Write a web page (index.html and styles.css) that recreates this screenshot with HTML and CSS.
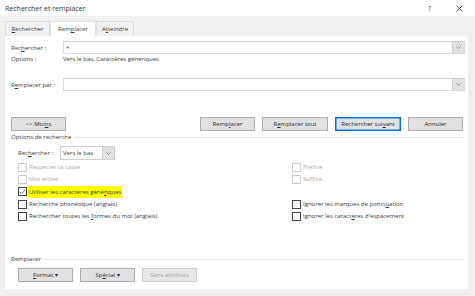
FILE: index.html
```html
<!DOCTYPE html>
<html lang="fr">
<head>
  <meta charset="UTF-8">
  <title>Rechercher et remplacer</title>
  <link rel="stylesheet" href="styles.css">
</head>
<body>
  <div class="titlebar">
    <span class="title">Rechercher et remplacer</span>
    <span class="help">?</span>
    <svg class="close" width="7" height="7" viewBox="0 0 7 7"><path d="M0.5 0.5 L6.5 6.5 M6.5 0.5 L0.5 6.5" stroke="#444" stroke-width="0.9"/></svg>
  </div>

  <div class="tabs">
    <div class="tab"><u>R</u>echercher</div>
    <div class="tab active">Rem<u>p</u>lacer</div>
    <div class="tab">A<u>t</u>teindre</div>
  </div>

  <div class="panel">
    <div class="field-row">
      <span class="label">Rec<u>h</u>ercher :</span>
      <div class="combo">
        <span class="combo-text">*</span>
        <span class="drop"><svg width="5" height="3" viewBox="0 0 5 3"><path d="M0.3 0.3 L2.5 2.5 L4.7 0.3" fill="none" stroke="#777" stroke-width="0.7"/></svg></span>
      </div>
    </div>
    <div class="info-row">
      <span class="label">Options :</span>
      <span>Vers le bas, Caractères génériques</span>
    </div>
    <div class="field-row replace">
      <span class="label">R<u>e</u>mplacer par :</span>
      <div class="combo">
        <span class="combo-text"></span>
        <span class="drop"><svg width="5" height="3" viewBox="0 0 5 3"><path d="M0.3 0.3 L2.5 2.5 L4.7 0.3" fill="none" stroke="#777" stroke-width="0.7"/></svg></span>
      </div>
    </div>

    <div class="actions">
      <button class="btn">&lt;&lt; Moi<u>n</u>s</button>
      <div class="spacer"></div>
      <button class="btn">Remp<u>l</u>acer</button>
      <button class="btn wide">R<u>e</u>mplacer tout</button>
      <button class="btn wide default">Rechercher sui<u>v</u>ant</button>
      <button class="btn">Annuler</button>
    </div>

    <div class="group-title"><span>Options de recherche</span></div>

    <div class="direction">
      <span class="label">Rec<u>h</u>ercher :</span>
      <div class="select">
        <span class="combo-text">Vers le bas</span>
        <span class="drop"><svg width="5" height="3" viewBox="0 0 5 3"><path d="M0.3 0.3 L2.5 2.5 L4.7 0.3" fill="none" stroke="#777" stroke-width="0.7"/></svg></span>
      </div>
    </div>

    <div class="checks">
      <div class="check disabled"><span class="box"></span><span>Respecter la casse</span></div>
      <div class="check disabled"><span class="box"></span><span>Préfixe</span></div>
      <div class="check disabled"><span class="box"></span><span>Mot entier</span></div>
      <div class="check disabled"><span class="box"></span><span>Suffixe</span></div>
      <div class="check"><span class="box"><svg width="7" height="6" viewBox="0 0 7 6"><path d="M0.8 3 L2.6 4.8 L6.2 0.8" fill="none" stroke="#444" stroke-width="0.8"/></svg></span><span class="mark">Utiliser les caractères géné<u>r</u>iques</span></div>
      <div class="check"></div>
      <div class="check"><span class="box"></span><span>Recherche phonétique (anglais)</span></div>
      <div class="check"><span class="box"></span><span>Ignorer les marques de ponct<u>u</u>ation</span></div>
      <div class="check"><span class="box"></span><span>Rechercher toutes les <u>f</u>ormes du mot (anglais)</span></div>
      <div class="check"><span class="box"></span><span>Ignorer les caract<u>è</u>res d'espacement</span></div>
    </div>

    <div class="group-title lower"><span>Remplacer</span></div>

    <div class="bottom-buttons">
      <button class="btn"><u>F</u>ormat &#9662;</button>
      <button class="btn">Sp<u>é</u>cial &#9662;</button>
      <button class="btn" disabled>Sans attributs</button>
    </div>
  </div>
</body>
</html>
```

FILE: styles.css
```css
body {
  margin: 0;
  padding: 0;
  background: #f0f0f0;
  font-family: 'Open Sans', sans-serif;
  font-size: 6px;
  color: #3a3a3a;
  width: 475px;
  height: 296px;
  overflow: hidden;
}
u {
  text-decoration-thickness: 0.5px;
}
.titlebar {
  height: 16px;
  background: #fff;
  display: flex;
  align-items: center;
  padding-left: 5px;
  font-size: 7px;
}
.title {
  flex: 1;
  color: #333;
}
.help {
  width: 8px;
  margin-right: 20px;
  color: #555;
}
.close {
  margin-right: 12px;
}
.tabs {
  display: flex;
  margin: 5px 0 0 5px;
  height: 15px;
}
.tab {
  display: flex;
  align-items: center;
  justify-content: center;
  padding: 0 6px;
  border: 1px solid #dcdcdc;
  border-bottom: none;
  background: #f0f0f0;
}
.tab:first-child {
  width: 31px;
}
.tab.active {
  background: #fff;
  width: 32px;
  border-color: #e4e4e4;
}
.tab:last-child {
  width: 24px;
}
.panel {
  background: #fff;
  margin: 0 7px 0 5px;
  height: 253px;
  padding: 5px 3px 0 6px;
  box-sizing: border-box;
}
.field-row {
  display: flex;
  align-items: center;
  height: 13px;
}
.field-row.replace {
  margin-top: 15px;
}
.label {
  width: 52px;
  flex-shrink: 0;
}
.combo {
  flex: 1;
  height: 13px;
  border: 1px solid #dadada;
  border-top-color: #cfcfcf;
  box-sizing: border-box;
  display: flex;
  align-items: stretch;
  background: #fff;
}
.combo-text {
  flex: 1;
  padding-left: 2px;
  display: flex;
  align-items: center;
}
.drop {
  width: 11px;
  background: #e1e1e1;
  border-left: 1px solid #cfcfcf;
  display: flex;
  align-items: center;
  justify-content: center;
}
.info-row {
  display: flex;
  height: 9px;
  align-items: center;
}
.actions {
  display: flex;
  margin-top: 26px;
  gap: 7px;
  padding-right: 2px;
}
.spacer {
  flex: 1;
}
.btn {
  font-family: 'Open Sans', sans-serif;
  font-size: 6px;
  color: #2a2a2a;
  width: 55px;
  height: 14px;
  padding: 0;
  background: #e1e1e1;
  border: 1px solid #adadad;
  box-sizing: border-box;
}
.btn.wide {
  width: 66px;
}
.btn.default {
  border: 1px solid #0078d7;
  box-shadow: inset 0 0 0 0.5px #0078d7;
}
.btn:disabled {
  background: #e8e8e8;
  border-color: #cfcfcf;
  color: #a5a5a5;
}
.group-title {
  display: flex;
  align-items: center;
  gap: 3px;
  height: 8px;
  margin-top: 2px;
  padding-right: 2px;
}
.group-title::after {
  content: "";
  flex: 1;
  height: 1px;
  background: #e6e6e6;
}
.group-title.lower {
  margin-top: 33px;
}
.direction {
  display: flex;
  align-items: center;
  margin: 5px 0 0 7px;
  height: 14px;
}
.direction .label {
  width: 42px;
}
.select {
  width: 55px;
  height: 14px;
  border: 1px solid #cfcfcf;
  box-sizing: border-box;
  display: flex;
  align-items: stretch;
}
.checks {
  display: grid;
  grid-template-columns: 274px 1fr;
  grid-auto-rows: 12.3px;
  margin: 1px 0 0 7px;
}
.check {
  display: flex;
  align-items: center;
  gap: 2px;
  white-space: nowrap;
}
.check.disabled {
  color: #a8a8a8;
}
.box {
  width: 9px;
  height: 9px;
  border: 1px solid #444;
  box-sizing: border-box;
  background: #fff;
  display: flex;
  align-items: center;
  justify-content: center;
}
.check.disabled .box {
  border-color: #cccccc;
}
.mark {
  background: #ffff00;
  padding: 2px 1px;
  margin-left: -1px;
}
.bottom-buttons {
  display: flex;
  gap: 7px;
  margin: 5px 0 0 7px;
}
```
